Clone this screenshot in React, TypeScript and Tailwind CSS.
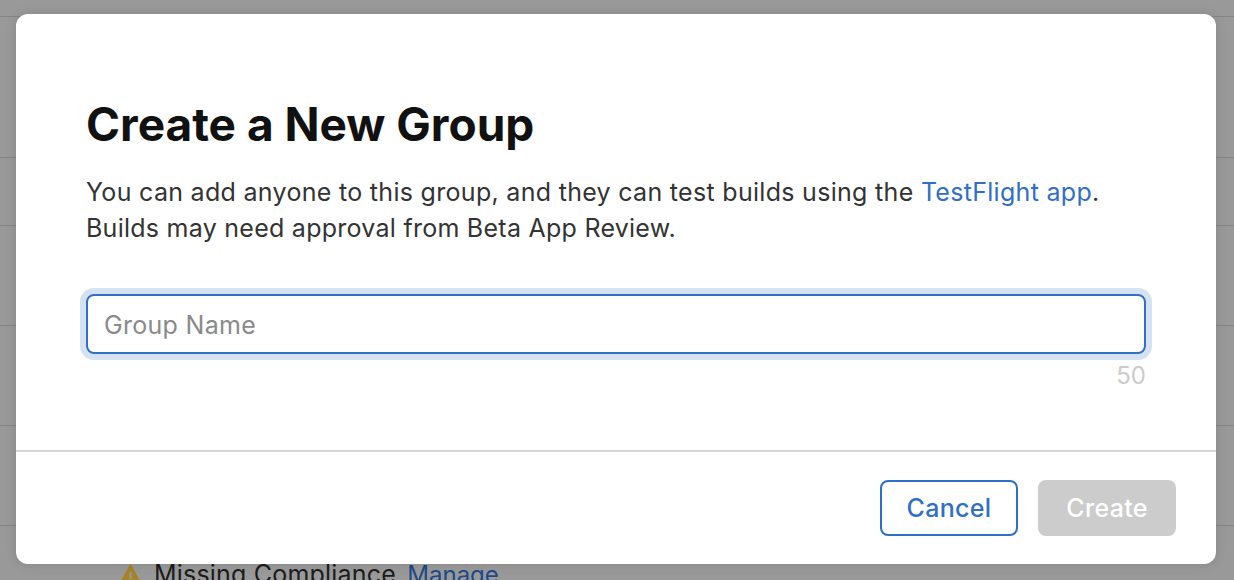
const ROW_HEIGHTS = ['h-[141px]', 'h-[68px]', 'h-[100px]', 'h-[100px]', 'h-[100px]']

function BackgroundPage() {
  return (
    <div className="h-full overflow-hidden bg-[#999999] pt-[16px]">
      {ROW_HEIGHTS.map((height, index) => (
        <div key={index} className={`${height} border-t border-[#858585]`} />
      ))}
      <div className="flex items-start gap-[12px] border-t border-[#858585] pl-[119px] pt-[32px] text-[25px] leading-[32px] tracking-[0.2px] text-[#1c1c1c]">
        <svg className="mt-[6px] shrink-0" width="23" height="22" viewBox="0 0 23 22" aria-hidden="true">
          <path d="M11.5 1 L22 20 H1 Z" fill="#a5832a" stroke="#a5832a" strokeWidth="1.5" strokeLinejoin="round" />
          <rect x="10.5" y="8" width="2" height="7" fill="#999999" />
        </svg>
        <span>
          Missing Compliance <span className="ml-[4px] text-[24px] tracking-normal text-[#1d4a87]">Manage</span>
        </span>
      </div>
    </div>
  )
}

export default function App() {
  return (
    <main className="relative h-[580px] w-[1234px] overflow-hidden font-['Inter',sans-serif]">
      <BackgroundPage />

      <div className="absolute left-[16px] top-[14px] flex h-[550px] w-[1200px] flex-col rounded-[12px] bg-white shadow-[0_0_12px_rgba(0,0,0,0.12)]">
        <div className="flex-1 px-[70px] pt-[82px]">
          <h1 className="text-[46px] font-bold leading-[56px] text-[#111111]">
            Create a New Group
          </h1>
          <p className="mt-[22px] text-[25px] leading-[36px] tracking-[0.3px] text-[#333333]">
            You can add anyone to this group, and they can test builds using the{' '}
            <span className="text-[#2f6fc4]">TestFlight app</span>.
            <br />
            <span className="tracking-[0.26px]">Builds may need approval from Beta App Review.</span>
          </p>
          <div className="mt-[48px] flex h-[60px] items-center rounded-[8px] border-2 border-[#2f6fc4] px-[16px] pt-[3px] text-[25px] tracking-[0.3px] text-[#8a8a8a] ring-[6px] ring-[#d5e2f4]">
            Group Name
          </div>
          <div className="mt-[6px] text-right text-[24px] leading-[32px] text-[#cccccc]">50</div>
        </div>

        <div className="flex h-[114px] shrink-0 items-center justify-end gap-[20px] border-t-2 border-[#d6d6d6] px-[40px] text-[25px] font-medium tracking-[0.3px]">
          <button
            type="button"
            className="flex h-[56px] w-[138px] items-center justify-center rounded-[8px] border-2 border-[#2f6fc4] pt-[2px] text-[#2f6fc4]"
          >
            Cancel
          </button>
          <button
            type="button"
            disabled
            className="flex h-[56px] w-[138px] items-center justify-center rounded-[8px] bg-[#cccccc] pt-[2px] text-white"
          >
            Create
          </button>
        </div>
      </div>
    </main>
  )
}
